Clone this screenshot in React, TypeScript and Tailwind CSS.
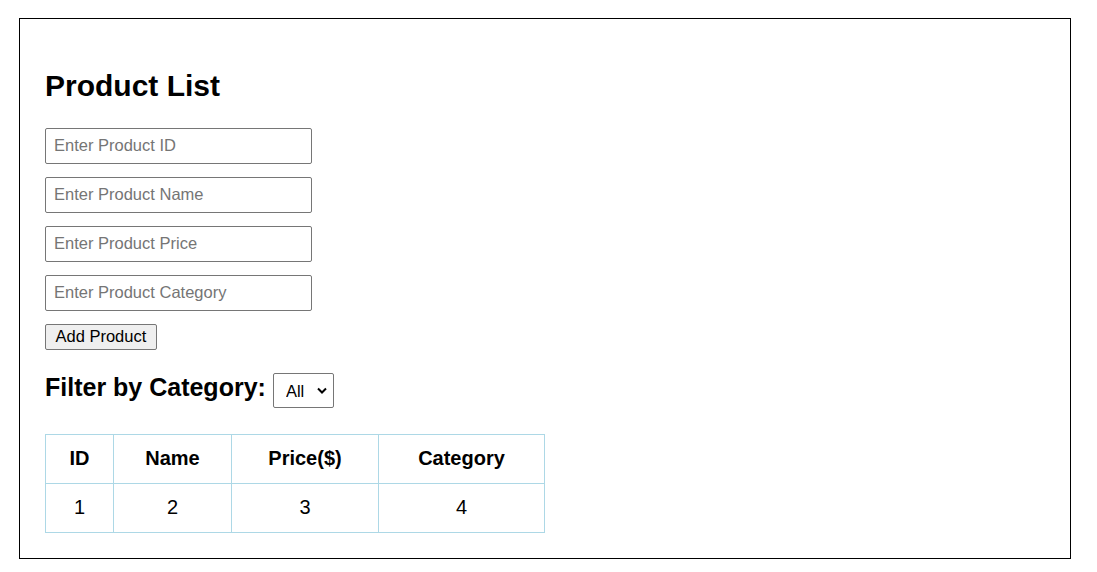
import React from "react";

export default function App() {
  const inputs = [
    "Enter Product ID",
    "Enter Product Name",
    "Enter Product Price",
    "Enter Product Category",
  ];
  const cols = [
    { label: "ID", w: "w-[68px]", v: "1" },
    { label: "Name", w: "w-[118px]", v: "2" },
    { label: "Price($)", w: "w-[147px]", v: "3" },
    { label: "Category", w: "w-[166px]", v: "4" },
  ];
  return (
    <div
      className="bg-white pl-[19px] pt-[18px] min-h-[572px] text-black"
      style={{ fontFamily: '"Liberation Sans", Arial, sans-serif' }}
    >
      <div className="w-[1052px] h-[541px] border border-black pl-[25px] pt-[50px]">
        <h1 className="text-[30px] leading-[34px] font-bold">Product List</h1>
        <div className="mt-[25px] flex flex-col gap-[13px]">
          {inputs.map((p) => (
            <input
              key={p}
              placeholder={p}
              className="w-[267px] h-[36px] border border-[#767676] rounded-[2px] px-[8px] pb-[2px] text-[16.5px] placeholder:text-[#757575] outline-none"
            />
          ))}
        </div>
        <button className="mt-[13px] h-[26px] px-[9.5px] pb-[1px] border border-[#767676] rounded-[2px] bg-[#efefef] text-[16.5px] leading-[19px] flex items-center">
          Add Product
        </button>
        <div className="mt-[23px] flex items-start">
          <h2 className="text-[25px] leading-[29px] font-bold">Filter by Category:</h2>
          <div className="relative ml-[7px]">
            <select className="appearance-none w-[61px] h-[35px] border border-[#767676] rounded-[2px] pl-[12px] pt-[1px] text-[16.5px] bg-white outline-none">
              <option>All</option>
            </select>
            <svg
              className="absolute right-[6px] top-[13px] pointer-events-none"
              width="12"
              height="9"
              viewBox="0 0 12 9"
            >
              <path d="M2 2.5 L6 6.5 L10 2.5" fill="none" stroke="#000" strokeWidth="2" />
            </svg>
          </div>
        </div>
        <table className="mt-[26px] border-collapse">
          <thead>
            <tr>
              {cols.map((c) => (
                <th
                  key={c.label}
                  className={`${c.w} h-[49px] border border-[#add8e6] text-[20px] font-bold text-center p-0 pb-[2px]`}
                >
                  {c.label}
                </th>
              ))}
            </tr>
          </thead>
          <tbody>
            <tr>
              {cols.map((c) => (
                <td
                  key={c.label}
                  className={`${c.w} h-[49px] border border-[#add8e6] text-[20px] text-center p-0 pb-[2px]`}
                >
                  {c.v}
                </td>
              ))}
            </tr>
          </tbody>
        </table>
      </div>
    </div>
  );
}
